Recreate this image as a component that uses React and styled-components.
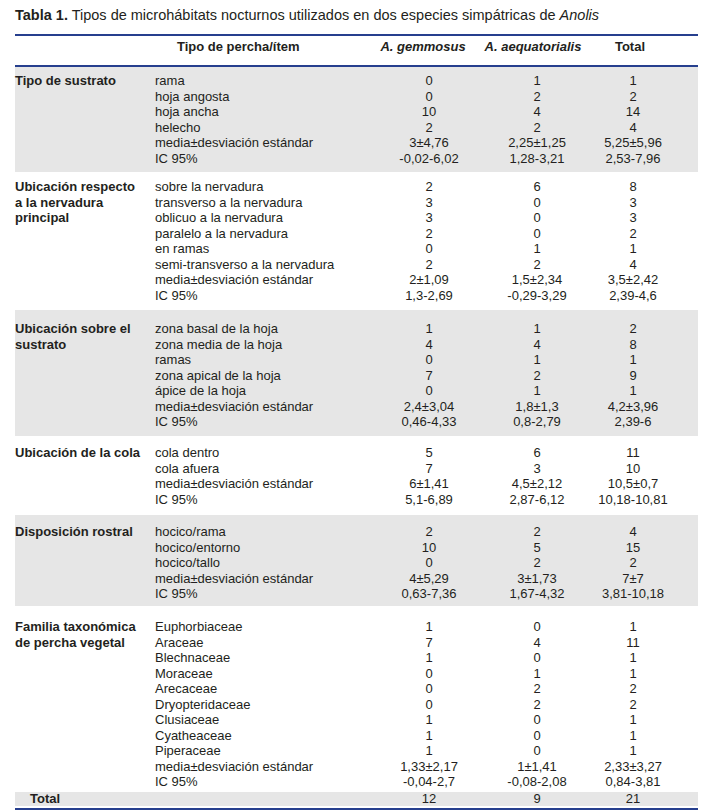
import React from "react";
import styled, { createGlobalStyle } from "styled-components";

const Global = createGlobalStyle`
  html, body { margin: 0; padding: 0; background: #ffffff; }
  body { font-family: "Liberation Sans", Arial, sans-serif; color: #231f20; }
`;

const NAVY = "#263f8e";
const GRAY = "#e6e6e6";

const Page = styled.div`
  width: 683px;
  padding: 7px 7px 0 15px;
`;

const Caption = styled.div`
  font-size: 14.5px;
  line-height: 17px;
  margin-bottom: 10px;
  white-space: nowrap;
  b { font-weight: 700; }
  i { font-style: italic; }
`;

const Table = styled.div`
  border-top: 2px solid ${NAVY};
  border-bottom: 2px solid ${NAVY};
  font-size: 13px;
  line-height: 15.5px;
`;

const HeaderRow = styled.div`
  display: flex;
  align-items: flex-start;
  box-sizing: border-box;
  height: 31px;
  padding-top: 3px;
  border-bottom: 2px solid ${NAVY};
  font-weight: 700;
`;

const Section = styled.div`
  display: flex;
  background: ${(p) => (p.$shade ? GRAY : "transparent")};
  padding-top: ${(p) => p.$pt}px;
  padding-bottom: ${(p) => p.$pb}px;
`;

const Category = styled.div`
  width: 128px;
  padding-right: 12px;
  flex: none;
  font-weight: 700;
`;

const Rows = styled.div`
  flex: 1;
  display: flex;
  flex-direction: column;
`;

const Row = styled.div`
  display: grid;
  grid-template-columns: 223px 102px 114px 78px 1fr;
`;

const Item = styled.div`
  padding-left: ${(p) => p.$indent || 0}px;
  white-space: nowrap;
`;

const Num = styled.div`
  text-align: center;
  white-space: nowrap;
  padding-right: ${(p) => (p.$nudge || 0) * 2}px;
  font-style: ${(p) => (p.$italic ? "italic" : "normal")};
`;

const TotalRow = styled.div`
  display: flex;
  background: ${GRAY};
  line-height: 14px;
  margin-bottom: 2px;
`;

const TotalLabel = styled.div`
  width: 125px;
  padding-left: 15px;
  flex: none;
  font-weight: 700;
`;

const sections = [
  {
    name: "Tipo de sustrato",
    shade: true,
    pt: 6,
    pb: 6,
    rows: [
      ["rama", "0", "1", "1"],
      ["hoja angosta", "0", "2", "2"],
      ["hoja ancha", "10", "4", "14"],
      ["helecho", "2", "2", "4"],
      ["media±desviación estándar", "3±4,76", "2,25±1,25", "5,25±5,96"],
      ["IC 95%", "-0,02-6,02", "1,28-3,21", "2,53-7,96"],
    ],
  },
  {
    name: "Ubicación respecto a la nervadura principal",
    shade: false,
    pt: 7,
    pb: 7,
    rows: [
      ["sobre la nervadura", "2", "6", "8"],
      ["transverso a la nervadura", "3", "0", "3"],
      ["oblicuo a la nervadura", "3", "0", "3"],
      ["paralelo a la nervadura", "2", "0", "2"],
      ["en ramas", "0", "1", "1"],
      ["semi-transverso a la nervadura", "2", "2", "4"],
      ["media±desviación estándar", "2±1,09", "1,5±2,34", "3,5±2,42"],
      ["IC 95%", "1,3-2,69", "-0,29-3,29", "2,39-4,6"],
    ],
  },
  {
    name: "Ubicación sobre el sustrato",
    shade: true,
    pt: 11,
    pb: 6.5,
    rows: [
      ["zona basal de la hoja", "1", "1", "2"],
      ["zona media de la hoja", "4", "4", "8"],
      ["ramas", "0", "1", "1"],
      ["zona apical de la hoja", "7", "2", "9"],
      ["ápice de la hoja", "0", "1", "1"],
      ["media±desviación estándar", "2,4±3,04", "1,8±1,3", "4,2±3,96"],
      ["IC 95%", "0,46-4,33", "0,8-2,79", "2,39-6"],
    ],
  },
  {
    name: "Ubicación de la cola",
    shade: false,
    pt: 9,
    pb: 8,
    rows: [
      ["cola dentro", "5", "6", "11"],
      ["cola afuera", "7", "3", "10"],
      ["media±desviación estándar", "6±1,41", "4,5±2,12", "10,5±0,7"],
      ["IC 95%", "5,1-6,89", "2,87-6,12", "10,18-10,81"],
    ],
  },
  {
    name: "Disposición rostral",
    shade: true,
    pt: 9,
    pb: 4.5,
    rows: [
      ["hocico/rama", "2", "2", "4"],
      ["hocico/entorno", "10", "5", "15"],
      ["hocico/tallo", "0", "2", "2"],
      ["media±desviación estándar", "4±5,29", "3±1,73", "7±7"],
      ["IC 95%", "0,63-7,36", "1,67-4,32", "3,81-10,18"],
    ],
  },
  {
    name: "Familia taxonómica de percha vegetal",
    shade: false,
    pt: 13,
    pb: 2.5,
    rows: [
      ["Euphorbiaceae", "1", "0", "1"],
      ["Araceae", "7", "4", "11"],
      ["Blechnaceae", "1", "0", "1"],
      ["Moraceae", "0", "1", "1"],
      ["Arecaceae", "0", "2", "2"],
      ["Dryopteridaceae", "0", "2", "2"],
      ["Clusiaceae", "1", "0", "1"],
      ["Cyatheaceae", "1", "0", "1"],
      ["Piperaceae", "1", "0", "1"],
      ["media±desviación estándar", "1,33±2,17", "1±1,41", "2,33±3,27"],
      ["IC 95%", "-0,04-2,7", "-0,08-2,08", "0,84-3,81"],
    ],
  },
];

export default function App() {
  return (
    <>
      <Global />
      <Page>
        <Caption>
          <b>Tabla 1.</b> Tipos de microhábitats nocturnos utilizados en dos especies simpátricas de{" "}
          <i>Anolis</i>
        </Caption>
        <Table>
          <HeaderRow>
            <Category />
            <Rows>
              <Row>
                <Item $indent={22}>Tipo de percha/ítem</Item>
                <Num $italic $nudge={6}>A. gemmosus</Num>
                <Num $italic $nudge={4}>A. aequatorialis</Num>
                <Num $nudge={3}>Total</Num>
                <div />
              </Row>
            </Rows>
          </HeaderRow>
          {sections.map((s) => (
            <Section key={s.name} $shade={s.shade} $pt={s.pt} $pb={s.pb}>
              <Category>{s.name}</Category>
              <Rows>
                {s.rows.map((r) => (
                  <Row key={r[0]}>
                    <Item>{r[0]}</Item>
                    <Num>{r[1]}</Num>
                    <Num>{r[2]}</Num>
                    <Num>{r[3]}</Num>
                    <div />
                  </Row>
                ))}
              </Rows>
            </Section>
          ))}
          <TotalRow>
            <TotalLabel>Total</TotalLabel>
            <Rows>
              <Row>
                <Item />
                <Num>12</Num>
                <Num>9</Num>
                <Num>21</Num>
                <div />
              </Row>
            </Rows>
          </TotalRow>
        </Table>
      </Page>
    </>
  );
}
